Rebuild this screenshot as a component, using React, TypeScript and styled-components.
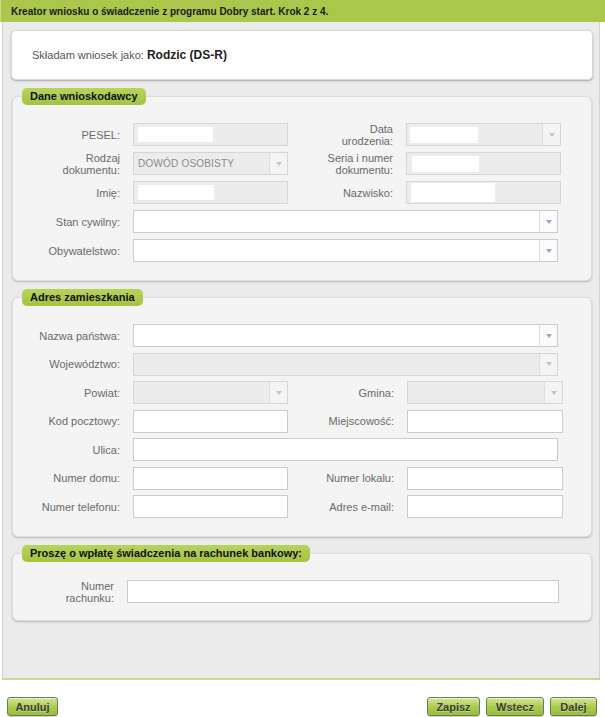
import React from "react";
import styled, { createGlobalStyle } from "styled-components";

const GlobalStyle = createGlobalStyle`
  html, body { margin: 0; padding: 0; background: #ffffff; }
  body { font-family: "Liberation Sans", Arial, sans-serif; font-size: 11px; color: #333; }
  * { box-sizing: border-box; }
`;

const Page = styled.div`
  width: 605px;
  height: 717px;
  display: flex;
  flex-direction: column;
  overflow: hidden;
`;

const Header = styled.div`
  height: 22px;
  background: #a9c84b;
  border-left: 1px solid #c9dc8e;
  padding: 0 10px;
  display: flex;
  align-items: center;
  font-weight: bold;
  font-size: 10px;
  color: #1a1a1a;
`;

const Panel = styled.div`
  height: 658px;
  margin: 0 5px 0 2px;
  background: #ebebeb;
  border-left: 1px solid #d3d3d3;
  border-right: 1px solid #d3d3d3;
  border-bottom: 2px solid #c2d993;
  padding: 8px 6px 0 8px;
  display: flex;
  flex-direction: column;
`;

const InfoCard = styled.div`
  height: 50px;
  background: #ffffff;
  border: 1px solid #dadada;
  border-radius: 5px;
  box-shadow: 0 1px 2px rgba(0, 0, 0, 0.3);
  padding: 0 20px;
  display: flex;
  align-items: center;
  color: #555;
  font-size: 11px;
`;

const Strong = styled.b`
  color: #222;
  font-size: 12px;
  margin-left: 3px;
`;

const Section = styled.div<{ $top: number; $bottom: number }>`
  margin: ${(p) => p.$top}px 1px 0 1px;
  padding-bottom: ${(p) => p.$bottom}px;
  background: #f4f4f4;
  border: 1px solid #dcdcdc;
  border-radius: 6px;
  box-shadow: 0 1px 2px rgba(0, 0, 0, 0.22);
  display: flex;
  flex-direction: column;
`;

const Legend = styled.div`
  align-self: flex-start;
  margin: -9px 0 0 9px;
  height: 17px;
  padding: 0 8px;
  background: linear-gradient(#b6d45c, #a3c341);
  border-radius: 5px;
  font-weight: bold;
  font-size: 11px;
  line-height: 17px;
  color: #111;
`;

const FormGrid = styled.div<{ $cols: string; $top: number; $gap: number }>`
  margin-top: ${(p) => p.$top}px;
  display: grid;
  grid-template-columns: ${(p) => p.$cols};
  column-gap: 13px;
  row-gap: ${(p) => p.$gap}px;
  grid-auto-rows: 23px;
`;

const Label = styled.label`
  align-self: center;
  text-align: right;
  color: #6a6a6a;
  font-size: 11px;
  line-height: 12px;
`;

const Field = styled.div<{ $disabled?: boolean; $span?: number; $w?: number }>`
  grid-column: span ${(p) => p.$span ?? 1};
  width: ${(p) => (p.$w ? `${p.$w}px` : "100%")};
  height: 23px;
  display: flex;
  align-items: center;
  background: ${(p) => (p.$disabled ? "#ececec" : "#ffffff")};
  border: 1px solid ${(p) => (p.$disabled ? "#d6d6d6" : "#c9cbcf")};
  overflow: hidden;
`;

const Value = styled.span`
  flex: 1;
  padding-left: 4px;
  color: #8a8a8a;
  font-size: 10px;
  letter-spacing: 0.2px;
`;

const Redacted = styled.span<{ $w: number; $h: number; $x: number }>`
  display: block;
  margin-left: ${(p) => p.$x}px;
  width: ${(p) => p.$w}px;
  height: ${(p) => p.$h}px;
  background: #ffffff;
`;

const Spacer = styled.span`
  flex: 1;
`;

const ArrowBox = styled.span<{ $disabled?: boolean }>`
  width: 18px;
  height: 21px;
  border-left: 1px solid #dedede;
  background: ${(p) => (p.$disabled ? "#f4f4f4" : "#fbfbfb")};
  display: flex;
  align-items: center;
  justify-content: center;
  svg {
    display: block;
  }
`;

const Arrow = ({ disabled }: { disabled?: boolean }) => (
  <ArrowBox $disabled={disabled}>
    <svg width="6" height="4" viewBox="0 0 6 4">
      <path d="M0 0 H6 L3 4 Z" fill={disabled ? "#c4c4c4" : "#98a6c4"} />
    </svg>
  </ArrowBox>
);

const Footer = styled.div`
  padding: 17px 8px 0 7px;
  display: flex;
  justify-content: space-between;
  align-items: flex-start;
`;

const ButtonGroup = styled.div`
  display: flex;
  gap: 6px;
`;

const Button = styled.button<{ $w: number }>`
  width: ${(p) => p.$w}px;
  height: 19px;
  padding: 0;
  border: 1px solid #6f7b59;
  border-radius: 3px;
  background: linear-gradient(#d2e892, #a9cb4c 55%, #98bd3a);
  box-shadow: inset 0 1px 0 rgba(255, 255, 255, 0.55), 0 1px 1px rgba(0, 0, 0, 0.2);
  font-family: "Liberation Sans", Arial, sans-serif;
  font-weight: bold;
  font-size: 11px;
  color: #3b3b3b;
  text-shadow: 0 1px 0 rgba(255, 255, 255, 0.35);
  cursor: pointer;
`;

const DANE_COLS = "107px 155px 92px 155px";
const ADRES_COLS = "107px 155px 93px 156px";
const BANK_COLS = "101px 432px";

export default function App() {
  return (
    <Page>
      <GlobalStyle />
      <Header>Kreator wniosku o świadczenie z programu Dobry start. Krok 2 z 4.</Header>
      <Panel>
        <InfoCard>
          Składam wniosek jako:<Strong>Rodzic (DS-R)</Strong>
        </InfoCard>

        <Section $top={16} $bottom={18}>
          <Legend>Dane wnioskodawcy</Legend>
          <FormGrid $cols={DANE_COLS} $top={18} $gap={6}>
            <Label>PESEL:</Label>
            <Field $disabled>
              <Redacted $x={4} $w={75} $h={15} />
            </Field>
            <Label>
              Data
              <br />
              urodzenia:
            </Label>
            <Field $disabled>
              <Redacted $x={3} $w={68} $h={16} />
              <Spacer />
              <Arrow disabled />
            </Field>

            <Label>
              Rodzaj
              <br />
              dokumentu:
            </Label>
            <Field $disabled>
              <Value>DOWÓD OSOBISTY</Value>
              <Arrow disabled />
            </Field>
            <Label>
              Seria i numer
              <br />
              dokumentu:
            </Label>
            <Field $disabled>
              <Redacted $x={5} $w={67} $h={16} />
            </Field>

            <Label>Imię:</Label>
            <Field $disabled>
              <Redacted $x={4} $w={76} $h={15} />
            </Field>
            <Label>Nazwisko:</Label>
            <Field $disabled>
              <Redacted $x={4} $w={84} $h={19} />
            </Field>

            <Label>Stan cywilny:</Label>
            <Field $span={3} $w={425}>
              <Spacer />
              <Arrow />
            </Field>

            <Label>Obywatelstwo:</Label>
            <Field $span={3} $w={425}>
              <Spacer />
              <Arrow />
            </Field>
          </FormGrid>
        </Section>

        <Section $top={16} $bottom={18}>
          <Legend>Adres zamieszkania</Legend>
          <FormGrid $cols={ADRES_COLS} $top={18} $gap={5.5}>
            <Label>Nazwa państwa:</Label>
            <Field $span={3} $w={425}>
              <Spacer />
              <Arrow />
            </Field>

            <Label>Województwo:</Label>
            <Field $span={3} $w={425} $disabled>
              <Spacer />
              <Arrow disabled />
            </Field>

            <Label>Powiat:</Label>
            <Field $disabled>
              <Spacer />
              <Arrow disabled />
            </Field>
            <Label>Gmina:</Label>
            <Field $disabled>
              <Spacer />
              <Arrow disabled />
            </Field>

            <Label>Kod pocztowy:</Label>
            <Field />
            <Label>Miejscowość:</Label>
            <Field />

            <Label>Ulica:</Label>
            <Field $span={3} $w={425} />

            <Label>Numer domu:</Label>
            <Field />
            <Label>Numer lokalu:</Label>
            <Field />

            <Label>Numer telefonu:</Label>
            <Field />
            <Label>Adres e-mail:</Label>
            <Field />
          </FormGrid>
        </Section>

        <Section $top={16} $bottom={17}>
          <Legend>Proszę o wpłatę świadczenia na rachunek bankowy:</Legend>
          <FormGrid $cols={BANK_COLS} $top={18} $gap={6}>
            <Label>
              Numer
              <br />
              rachunku:
            </Label>
            <Field />
          </FormGrid>
        </Section>
      </Panel>
      <Footer>
        <Button $w={51}>Anuluj</Button>
        <ButtonGroup>
          <Button $w={53}>Zapisz</Button>
          <Button $w={58}>Wstecz</Button>
          <Button $w={47}>Dalej</Button>
        </ButtonGroup>
      </Footer>
    </Page>
  );
}
